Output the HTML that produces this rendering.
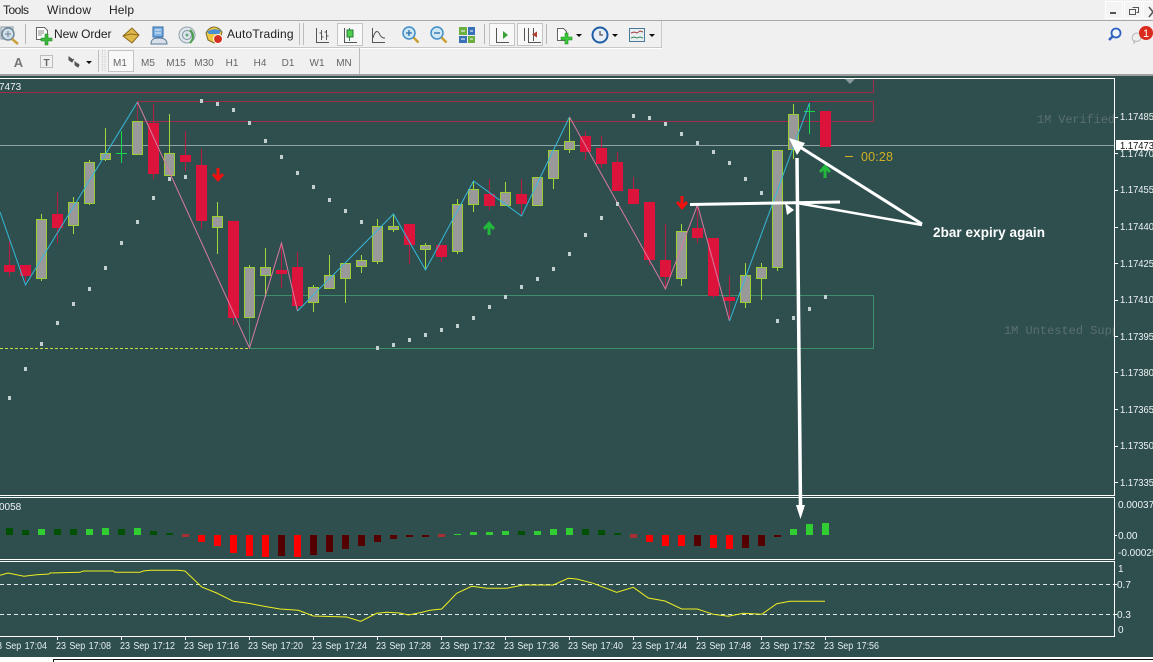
<!DOCTYPE html>
<html><head><meta charset="utf-8"><style>
html,body{margin:0;padding:0;background:#f0f0f0;width:1153px;height:662px;overflow:hidden}
svg{display:block;font-family:"Liberation Sans",sans-serif}
.w{stroke:#a4d83a;stroke-width:1;fill:none}
.r{stroke:#b81c42;stroke-width:1;fill:none}
.bu{fill:#999;stroke:#9acd32;stroke-width:1}
.be{fill:#dc143c;stroke:#dc143c;stroke-width:1}
.d{fill:#c3d0d0}
.p{fill:#eef3f3;font-size:10px}
.t{fill:#e6eeee;font-size:10px;word-spacing:1px}
.tf{fill:#666;font-size:10px;text-anchor:middle}
.m{fill:#222;font-size:12px}
.lg{fill:#32cd32}.dg{fill:#005000}.rd{fill:#f00}.dr{fill:#550000}.mr{fill:#a83030}
.zr{fill:#a42a4a}.zg{fill:#3c8f6a}
</style></head><body>
<svg width="1153" height="662" viewBox="0 0 1153 662" xmlns="http://www.w3.org/2000/svg">
<rect width="1153" height="662" fill="#f0f0f0"/>
<!-- menu -->
<text class="m" x="3" y="14" textLength="26">Tools</text>
<text class="m" x="47" y="14" textLength="44">Window</text>
<text class="m" x="109" y="14" textLength="25">Help</text>
<rect x="0" y="20" width="1153" height="1" fill="#a8a8a8"/>
<rect x="1105.500" y="1.500" width="17" height="17" fill="#f4f4f4" stroke="#fff"/>
<rect x="1124.500" y="1.500" width="17" height="17" fill="#f4f4f4" stroke="#fff"/>
<rect x="1143.500" y="1.500" width="12" height="17" fill="#f4f4f4" stroke="#fff"/>
<rect x="1110" y="12" width="6" height="2" fill="#555"/>
<path d="M1132.500 7.500h6v5h-2M1129.500 9.500h6v5h-6z" fill="none" stroke="#555"/>
<path d="M1149 7l4 5-4 5" fill="none" stroke="#555" stroke-width="1.500"/>
<!-- toolbars -->
<path d="M0 47.500H662M661.500 21V48" stroke="#c8c8c8" fill="none"/>
<path d="M0 48.500H662" stroke="#fff"/>
<path d="M359.500 48V74" stroke="#bbb"/>
<path d="M25.500 24V44M484.500 24V44M546.500 24V44" stroke="#b5b5b5"/>
<path d="M299.500 23V45M303.500 23V45M98.500 50V72" stroke="#bcbcbc"/>
<path d="M102.500 50V72M105 50V72" stroke="#c8c8c8" stroke-dasharray="1 1"/>
<rect x="337.500" y="23.500" width="25" height="22" fill="#f8f8f8" stroke="#c4c4c4"/>
<rect x="489.500" y="23.500" width="25" height="22" fill="#f8f8f8" stroke="#c4c4c4"/>
<rect x="517.500" y="23.500" width="25" height="22" fill="#f8f8f8" stroke="#c4c4c4"/>
<rect x="108.500" y="50.500" width="25" height="21" fill="#f8f8f8" stroke="#c4c4c4"/>
<!-- left magnifier -->
<rect x="1" y="27" width="12" height="12" fill="#dce4ea" stroke="#8a9aa8"/>
<circle cx="8" cy="34" r="6" fill="#cfe0ea" stroke="#6f8698" stroke-width="1.500"/>
<path d="M5 34h6M8 31v6" stroke="#6a7f90"/>
<path d="M12 39l6 5" stroke="#c9a040" stroke-width="2.500"/>
<!-- new order -->
<path d="M36.500 27.500h8l3 3v9h-11z" fill="#fff" stroke="#666"/>
<path d="M38 31h6M38 33h6M38 35h4" stroke="#888"/>
<path d="M45 34h3v4h4v3h-4v4h-3v-4h-4v-3h4z" fill="#3cb83c" stroke="#1f8a1f" stroke-width=".6"/>
<text x="54" y="38" font-size="12" fill="#222" textLength="57.500">New Order</text>
<!-- diamond -->
<path d="M123 36l9-8 7 7-7 8z" fill="#e0b84a" stroke="#8a6a20"/>
<path d="M123 36l8-2 8 1" stroke="#8a6a20" fill="none"/>
<!-- monitor person -->
<rect x="153" y="27" width="10" height="10" fill="#7bb0e0" stroke="#2f67a8"/>
<path d="M155 30h6M155 33h6" stroke="#e8f0f8"/>
<path d="M151 44c0-5 3-6 8-6s8 2 8 6z" fill="#d8dfe8" stroke="#5a7a9a"/>
<!-- signal -->
<circle cx="187" cy="35" r="8" fill="#dfe5e8" stroke="#8fa3ae"/>
<circle cx="187" cy="35" r="4.500" fill="none" stroke="#7c94a2"/>
<circle cx="187" cy="35" r="1.500" fill="#6a8"/>
<path d="M190 30c4 3 4 9 0 13" stroke="#4aa04a" stroke-width="2" fill="none"/>
<!-- autotrading -->
<path d="M206 33c2-4 5-6 8-6s6 2 8 5l-2 8-6 3-6-3z" fill="#f0c840" stroke="#7a6a30"/>
<path d="M207 32c3-3 10-4 14-1l-2 3h-10z" fill="#4a90d0"/>
<circle cx="218" cy="39" r="4.500" fill="#d83020" stroke="#fff"/>
<text x="227" y="38" font-size="12" fill="#222" textLength="66.500">AutoTrading</text>
<!-- chart types -->
<g fill="none" stroke="#555">
<path d="M316.500 28V42.500H329M321.500 30V40M326.500 30V40M319.500 33h2M321.500 37h2M324.500 32h2M326.500 36h2" />
<path d="M344.500 28V42.500H357"/><path d="M349.500 28V41" stroke="#2a8a4a"/>
<path d="M372.500 28V42.500H385M373 38c2-8 5-8 7-3 2 3 3 3 5 3"/>
<path d="M496.500 28V42.500H509M528.500 28V42.500H541M524.500 28V41M533.500 28V41"/>
</g>
<rect x="347" y="30" width="6" height="7" fill="#4fcf4f" stroke="#2a7a3a"/>
<path d="M503 31l5 4-5 4z" fill="#3aa03a"/>
<path d="M532 34.500l5-3v6z" fill="#b04030"/>
<!-- zoom in/out -->
<g>
<circle cx="409" cy="33" r="6" fill="#cfe6f5" stroke="#3f8fc8" stroke-width="1.500"/>
<path d="M406 33h6M409 30v6" stroke="#2a6ea8" stroke-width="1.300"/>
<path d="M413.500 37.500l5 5" stroke="#c8a030" stroke-width="2.500"/>
<circle cx="437" cy="33" r="6" fill="#cfe6f5" stroke="#3f8fc8" stroke-width="1.500"/>
<path d="M434 33h6" stroke="#2a6ea8" stroke-width="1.300"/>
<path d="M441.500 37.500l5 5" stroke="#c8a030" stroke-width="2.500"/>
</g>
<!-- tile -->
<rect x="459" y="27" width="8" height="8" fill="#6cb040"/><rect x="468" y="27" width="7" height="8" fill="#3a70b8"/>
<rect x="459" y="36" width="8" height="7" fill="#3a70b8"/><rect x="468" y="36" width="7" height="7" fill="#6cb040"/>
<path d="M461 31h4M470 31h3M461 39h4M470 39h3" stroke="#fff"/>
<!-- indicators -->
<path d="M557.500 28.500h6l3 3v9h-9z" fill="#fff" stroke="#666"/>
<path d="M565 33h3v4h4v3h-4v4h-3v-4h-4v-3h4z" fill="#3cc83c" stroke="#1f8a1f" stroke-width=".6"/>
<path d="M576 34h6l-3 3zM612 34h6l-3 3zM649 34h6l-3 3zM86 61h6l-3 3z" fill="#111"/>
<!-- clock -->
<circle cx="600" cy="35" r="7.500" fill="#e8eef5" stroke="#1f5fa8" stroke-width="2"/>
<path d="M600 31v4h3" stroke="#333" fill="none"/>
<!-- template -->
<rect x="629.500" y="28.500" width="15" height="13" fill="#e8eef2" stroke="#4a7a9a"/>
<path d="M631 33l3-1 3 1 3-2 3 1" stroke="#a04040" fill="none"/><path d="M631 38l3-1 3 1 3-1 3 1" stroke="#3a8a5a" fill="none"/>
<!-- right icons -->
<circle cx="1116" cy="33" r="4.500" fill="#f0f4fa" stroke="#2f62c0" stroke-width="1.800"/>
<path d="M1113 36l-4 4" stroke="#2f62c0" stroke-width="2.500"/>
<path d="M1134 34c3-2 7-1 7 3s-4 5-6 4l-1 3v-3c-3-2-2-5 0-7z" fill="#eee" stroke="#b8b8b8"/>
<circle cx="1146" cy="33" r="7" fill="#d92a1c"/>
<text x="1146" y="37" font-size="11" fill="#fff" text-anchor="middle">1</text>
<!-- row3 -->
<text x="18.500" y="67" font-size="13" font-weight="bold" fill="#777" text-anchor="middle">A</text>
<rect x="40.500" y="55.500" width="12" height="12" fill="none" stroke="#888" stroke-dasharray="1 1"/>
<text x="46.500" y="66" font-size="10" font-weight="bold" fill="#666" text-anchor="middle">T</text>
<path d="M69 57l4 3-1 2-3-2zM75 62l4 3-1 2-3-2zM74 59l-2 2M79 64l-2 1" fill="#555" stroke="#555"/>
<g>
<text class="tf" x="120" y="66">M1</text><text class="tf" x="148" y="66">M5</text><text class="tf" x="176" y="66">M15</text><text class="tf" x="204" y="66">M30</text><text class="tf" x="232" y="66">H1</text><text class="tf" x="260" y="66">H4</text><text class="tf" x="288" y="66">D1</text><text class="tf" x="317" y="66">W1</text><text class="tf" x="344" y="66">MN</text>
</g>
<!-- chart bg -->
<rect x="0" y="74" width="1153" height="2" fill="#a0a0a0"/>
<rect x="0" y="76" width="1153" height="581" fill="#2f4f4f"/>
<!-- zone rects -->
<rect class="zr" x="0" y="92" width="874" height="1"/>
<rect class="zr" x="873" y="79" width="1" height="14"/>
<rect class="zr" x="137" y="101" width="737" height="1"/>
<rect class="zr" x="137" y="121" width="737" height="1"/>
<rect class="zr" x="137" y="101" width="1" height="21"/>
<rect class="zr" x="873" y="101" width="1" height="21"/>
<rect class="zg" x="249" y="295" width="625" height="1"/>
<rect class="zg" x="249" y="348" width="625" height="1"/>
<rect class="zg" x="249" y="295" width="1" height="54"/>
<rect class="zg" x="873" y="295" width="1" height="54"/>
<rect x="0" y="145" width="1114" height="1" fill="#8ea3a6"/>
<path d="M0 348.500H249" stroke="#c8e040" stroke-dasharray="3 2" shape-rendering="crispEdges"/>
<path d="M845 79l5 5 5-5z" fill="#8a9a9a"/>
<text x="1037" y="123" font-family="Liberation Mono" font-size="12" fill="#5a6e6e" textLength="78">1M Verified</text>
<text x="1004" y="334" font-family="Liberation Mono" font-size="12" fill="#5a6e6e" textLength="115">1M Untested Supp</text>
<rect x="1115" y="300" width="38" height="60" fill="#2f4f4f"/>
<!-- candles -->
<g shape-rendering="crispEdges">
<path class="r" d="M9.500 241V277M25.500 265V282M57.500 192V243M153.500 104V179M185.500 131V171M201.500 149V229M233.500 221V325M281.500 243V288M297.500 252V310M409.500 224V264M441.500 245V262M489.500 179V210M521.500 179V215M585.500 131V160M601.500 136V168M617.500 152V190M633.500 177V203M649.500 202V265M665.500 224V288M697.500 207V243M713.500 238V298M729.500 275V320"/>
<path class="w" d="M41.500 214V281M73.500 197V234M89.500 160V205M105.500 128V161M137.500 121V154M169.500 114V176M217.500 202V254M249.500 265V317M265.500 248V297M313.500 285V312M329.500 255V288M345.500 263V303M361.500 255V273M377.500 219V264M393.500 215V232M425.500 243V270M457.500 199V254M473.500 181V212M505.500 182V205M537.500 177V205M553.500 150V189M569.500 118V153M681.500 224V286M745.500 263V308M761.500 263V300M777.500 150V271M793.500 104V159"/>
<path d="M116 153.500H127M121.500 131V163M804 111.500H815M809.500 103V134" stroke="#16d84a" fill="none"/>
<rect class="be" x="4.500" y="265.500" width="10" height="6"/>
<rect class="be" x="20.500" y="265.500" width="10" height="10"/>
<rect class="bu" x="36.500" y="219.500" width="10" height="59"/>
<rect class="be" x="52.500" y="214.500" width="10" height="13"/>
<rect class="bu" x="68.500" y="202.500" width="10" height="23"/>
<rect class="bu" x="84.500" y="162.500" width="10" height="41"/>
<rect class="bu" x="100.500" y="153.500" width="10" height="6"/>
<rect class="bu" x="132.500" y="121.500" width="10" height="33"/>
<rect class="be" x="148.500" y="123.500" width="10" height="50"/>
<rect class="bu" x="164.500" y="153.500" width="10" height="22"/>
<rect class="be" x="180.500" y="155.500" width="10" height="6"/>
<rect class="be" x="196.500" y="165.500" width="10" height="55"/>
<rect class="bu" x="212.500" y="216.500" width="10" height="11"/>
<rect class="be" x="228.500" y="221.500" width="10" height="96"/>
<rect class="bu" x="244.500" y="267.500" width="10" height="50"/>
<rect class="bu" x="260.500" y="267.500" width="10" height="8"/>
<rect class="be" x="276.500" y="270.500" width="10" height="3"/>
<rect class="be" x="292.500" y="267.500" width="10" height="38"/>
<rect class="bu" x="308.500" y="287.500" width="10" height="15"/>
<rect class="bu" x="324.500" y="275.500" width="10" height="13"/>
<rect class="bu" x="340.500" y="263.500" width="10" height="15"/>
<rect class="bu" x="356.500" y="260.500" width="10" height="6"/>
<rect class="bu" x="372.500" y="226.500" width="10" height="35"/>
<rect class="bu" x="388.500" y="226.500" width="10" height="3"/>
<rect class="be" x="404.500" y="224.500" width="10" height="20"/>
<rect class="bu" x="420.500" y="245.500" width="10" height="4"/>
<rect class="be" x="436.500" y="245.500" width="10" height="11"/>
<rect class="bu" x="452.500" y="204.500" width="10" height="47"/>
<rect class="bu" x="468.500" y="189.500" width="10" height="15"/>
<rect class="be" x="484.500" y="194.500" width="10" height="11"/>
<rect class="bu" x="500.500" y="192.500" width="10" height="13"/>
<rect class="be" x="516.500" y="194.500" width="10" height="9"/>
<rect class="bu" x="532.500" y="177.500" width="10" height="28"/>
<rect class="bu" x="548.500" y="150.500" width="10" height="28"/>
<rect class="bu" x="564.500" y="141.500" width="10" height="8"/>
<rect class="be" x="580.500" y="136.500" width="10" height="15"/>
<rect class="be" x="596.500" y="148.500" width="10" height="15"/>
<rect class="be" x="612.500" y="162.500" width="10" height="28"/>
<rect class="be" x="628.500" y="189.500" width="10" height="14"/>
<rect class="be" x="644.500" y="202.500" width="10" height="57"/>
<rect class="be" x="660.500" y="260.500" width="10" height="16"/>
<rect class="bu" x="676.500" y="231.500" width="10" height="47"/>
<rect class="be" x="692.500" y="228.500" width="10" height="9"/>
<rect class="be" x="708.500" y="238.500" width="10" height="57"/>
<rect class="be" x="724.500" y="297.500" width="10" height="3"/>
<rect class="bu" x="740.500" y="275.500" width="10" height="27"/>
<rect class="bu" x="756.500" y="267.500" width="10" height="11"/>
<rect class="bu" x="772.500" y="150.500" width="10" height="117"/>
<rect class="bu" x="788.500" y="114.500" width="10" height="35"/>
<rect class="be" x="820.500" y="111.500" width="10" height="35"/>
</g>
<!-- zigzag -->
<path d="M0 212L25.500 285L137.500 102" fill="none" stroke="#35b8d8"/>
<path d="M137.500 102L249.500 348L281.500 243L297.500 311" fill="none" stroke="#d87aa0"/>
<path d="M297.500 311L393.500 214L425.500 270L473.500 181L521.500 216L569.500 117" fill="none" stroke="#35b8d8"/>
<path d="M569.500 117L665.500 289L697.500 205L729.500 321" fill="none" stroke="#d87aa0"/>
<path d="M729.500 321L809.500 103" fill="none" stroke="#35b8d8"/>
<!-- SAR dots -->
<g class="d">
<rect x="8" y="396" width="3" height="4"/><rect x="24" y="367" width="3" height="4"/><rect x="40" y="342" width="3" height="4"/><rect x="56" y="321" width="3" height="4"/><rect x="72" y="302" width="3" height="4"/><rect x="88" y="287" width="3" height="4"/><rect x="104" y="266" width="3" height="4"/><rect x="120" y="241" width="3" height="4"/><rect x="136" y="220" width="3" height="4"/><rect x="152" y="196" width="3" height="4"/><rect x="168" y="177" width="3" height="4"/><rect x="184" y="175" width="3" height="4"/>
<rect x="200" y="99" width="3" height="4"/><rect x="216" y="102" width="3" height="4"/><rect x="232" y="108" width="3" height="4"/><rect x="248" y="121" width="3" height="4"/><rect x="264" y="139" width="3" height="4"/><rect x="280" y="155" width="3" height="4"/><rect x="296" y="171" width="3" height="4"/><rect x="312" y="185" width="3" height="4"/><rect x="328" y="198" width="3" height="4"/><rect x="344" y="209" width="3" height="4"/><rect x="360" y="220" width="3" height="4"/>
<rect x="376" y="346" width="3" height="4"/><rect x="392" y="343" width="3" height="4"/><rect x="408" y="338" width="3" height="4"/><rect x="424" y="333" width="3" height="4"/><rect x="440" y="328" width="3" height="4"/><rect x="456" y="324" width="3" height="4"/><rect x="472" y="316" width="3" height="4"/><rect x="488" y="305" width="3" height="4"/><rect x="504" y="295" width="3" height="4"/><rect x="520" y="285" width="3" height="4"/><rect x="536" y="277" width="3" height="4"/><rect x="552" y="267" width="3" height="4"/><rect x="568" y="252" width="3" height="4"/><rect x="584" y="233" width="3" height="4"/><rect x="600" y="216" width="3" height="4"/><rect x="616" y="202" width="3" height="4"/>
<rect x="632" y="114" width="3" height="4"/><rect x="648" y="116" width="3" height="4"/><rect x="664" y="122" width="3" height="4"/><rect x="680" y="132" width="3" height="4"/><rect x="696" y="141" width="3" height="4"/><rect x="712" y="150" width="3" height="4"/><rect x="728" y="161" width="3" height="4"/><rect x="744" y="177" width="3" height="4"/><rect x="760" y="191" width="3" height="4"/>
<rect x="776" y="319" width="3" height="4"/><rect x="792" y="316" width="3" height="4"/><rect x="808" y="307" width="3" height="4"/><rect x="824" y="295" width="3" height="4"/>
</g>
<!-- signal arrows -->
<polygon transform="translate(218 175)" fill="#f01010" points="0,7 6,0 4,-2 1.500,0.500 1.500,-7 -1.500,-7 -1.500,0.500 -4,-2 -6,0"/>
<polygon transform="translate(682 203)" fill="#f01010" points="0,7 6,0 4,-2 1.500,0.500 1.500,-7 -1.500,-7 -1.500,0.500 -4,-2 -6,0"/>
<polygon transform="translate(489 228)" fill="#22b83c" points="0,-7 6,0 4,2 1.500,-0.500 1.500,7 -1.500,7 -1.500,-0.500 -4,2 -6,0"/>
<polygon transform="translate(825 171)" fill="#22b83c" points="0,-7 6,0 4,2 1.500,-0.500 1.500,7 -1.500,7 -1.500,-0.500 -4,2 -6,0"/>
<!-- countdown -->
<path d="M845 156.500h8" stroke="#d0b020"/>
<text x="861" y="161" font-size="12.500" fill="#d0b020" textLength="32">00:28</text>
<!-- frames -->
<g fill="none" stroke="#fff" shape-rendering="crispEdges">
<path d="M0 78.500H1114.500V495.500H0"/>
<path d="M0 497.500H1114.500V559.500H0"/>
<path d="M0 561.500H1114.500V636.500H0"/>
</g>
<!-- annotations -->
<g fill="none" stroke="#fff" stroke-linecap="butt">
<path d="M690 204.500L840 202" stroke-width="3"/>
<path d="M797 158L800.500 506" stroke-width="3.500"/>
<path d="M800 147L922 224" stroke-width="3"/>
<path d="M797 203L922 225" stroke-width="2.500"/>
</g>
<g fill="#fff">
<polygon points="789,138 805,143 797,155"/>
<polygon points="785,203 794,210 787,215"/>
<polygon points="796,505 805,505 800.500,519"/>
</g>
<text x="933" y="237" font-size="13.500" font-weight="bold" fill="#fff" textLength="112">2bar expiry again</text>
<!-- price axis -->
<g stroke="#fff" shape-rendering="crispEdges">
<path d="M1115 117.500h3M1115 153.500h3M1115 190.500h3M1115 227.500h3M1115 263.500h3M1115 300.500h3M1115 336.500h3M1115 372.500h3M1115 409.500h3M1115 446.500h3M1115 482.500h3M1115 535.500h2M1115 584.500h2M1115 614.500h2"/>
</g>
<text class="p" x="1120" y="120" textLength="34" lengthAdjust="spacingAndGlyphs">1.17485</text>
<text class="p" x="1120" y="157" textLength="34" lengthAdjust="spacingAndGlyphs">1.17470</text>
<text class="p" x="1120" y="193" textLength="34" lengthAdjust="spacingAndGlyphs">1.17455</text>
<text class="p" x="1120" y="230" textLength="34" lengthAdjust="spacingAndGlyphs">1.17440</text>
<text class="p" x="1120" y="267" textLength="34" lengthAdjust="spacingAndGlyphs">1.17425</text>
<text class="p" x="1120" y="303" textLength="34" lengthAdjust="spacingAndGlyphs">1.17410</text>
<text class="p" x="1120" y="340" textLength="34" lengthAdjust="spacingAndGlyphs">1.17395</text>
<text class="p" x="1120" y="376" textLength="34" lengthAdjust="spacingAndGlyphs">1.17380</text>
<text class="p" x="1120" y="413" textLength="34" lengthAdjust="spacingAndGlyphs">1.17365</text>
<text class="p" x="1120" y="449" textLength="34" lengthAdjust="spacingAndGlyphs">1.17350</text>
<text class="p" x="1120" y="486" textLength="34" lengthAdjust="spacingAndGlyphs">1.17335</text>
<rect x="1116" y="140" width="37" height="10" fill="#fff"/>
<text x="1120" y="149" font-size="10" fill="#111" textLength="34" lengthAdjust="spacingAndGlyphs">1.17473</text>
<text class="p" x="1118" y="508">0.000377</text>
<text class="p" x="1118" y="539">0.00</text>
<text class="p" x="1118" y="556">-0.00025</text>
<text class="p" x="1118" y="572">1</text>
<text class="p" x="1117" y="588">0.7</text>
<text class="p" x="1117" y="618">0.3</text>
<text class="p" x="1118" y="633">0</text>
<text class="p" x="-1" y="90">7473</text>
<text class="p" x="-1" y="510">0058</text>
<!-- histogram -->
<g shape-rendering="crispEdges">
<rect class="dg" x="6" y="528" width="7" height="7"/><rect class="dg" x="22" y="530" width="7" height="5"/><rect class="lg" x="38" y="529" width="7" height="6"/><rect class="dg" x="54" y="529" width="7" height="6"/><rect class="dg" x="70" y="529" width="7" height="6"/><rect class="lg" x="86" y="529" width="7" height="6"/><rect class="lg" x="102" y="528" width="7" height="7"/><rect class="dg" x="118" y="529" width="7" height="6"/><rect class="lg" x="134" y="528" width="7" height="7"/><rect class="dg" x="150" y="531" width="7" height="4"/><rect class="dg" x="166" y="533" width="7" height="2"/>
<rect class="mr" x="182" y="534" width="7" height="3"/><rect class="rd" x="198" y="535" width="7" height="7"/><rect class="rd" x="214" y="535" width="7" height="11"/><rect class="rd" x="230" y="535" width="7" height="18"/><rect class="rd" x="246" y="535" width="7" height="21"/><rect class="rd" x="262" y="535" width="7" height="22"/><rect class="dr" x="278" y="535" width="7" height="21"/><rect class="rd" x="294" y="535" width="7" height="22"/><rect class="dr" x="310" y="535" width="7" height="20"/><rect class="dr" x="326" y="535" width="7" height="17"/><rect class="dr" x="342" y="535" width="7" height="14"/><rect class="dr" x="358" y="535" width="7" height="11"/><rect class="dr" x="374" y="535" width="7" height="7"/><rect class="dr" x="390" y="535" width="7" height="4"/><rect class="dr" x="406" y="535" width="7" height="2"/><rect class="dr" x="422" y="535" width="7" height="2"/>
<rect class="mr" x="438" y="534" width="7" height="3"/><rect class="lg" x="454" y="534" width="7" height="1"/><rect class="lg" x="470" y="532" width="7" height="3"/><rect class="lg" x="486" y="532" width="7" height="3"/><rect class="lg" x="502" y="531" width="7" height="4"/><rect class="dg" x="518" y="531" width="7" height="4"/><rect class="lg" x="534" y="531" width="7" height="4"/><rect class="lg" x="550" y="529" width="7" height="6"/><rect class="lg" x="566" y="528" width="7" height="7"/><rect class="dg" x="582" y="529" width="7" height="6"/><rect class="dg" x="598" y="530" width="7" height="5"/><rect class="dg" x="614" y="533" width="7" height="2"/>
<rect class="mr" x="630" y="534" width="7" height="4"/><rect class="rd" x="646" y="535" width="7" height="7"/><rect class="rd" x="662" y="535" width="7" height="11"/><rect class="rd" x="678" y="535" width="7" height="11"/><rect class="dr" x="694" y="535" width="7" height="11"/><rect class="rd" x="710" y="535" width="7" height="13"/><rect class="rd" x="726" y="535" width="7" height="14"/><rect class="dr" x="742" y="535" width="7" height="13"/><rect class="dr" x="758" y="535" width="7" height="11"/><rect class="dr" x="774" y="535" width="7" height="2"/>
<rect class="lg" x="790" y="529" width="7" height="6"/><rect class="lg" x="806" y="524" width="7" height="11"/><rect class="lg" x="822" y="523" width="7" height="12"/>
</g>
<!-- stochastic -->
<path d="M0 584.500H1114M0 614.500H1114" stroke="#dfe8e8" stroke-dasharray="4 3" fill="none"/>
<polyline fill="none" stroke="#eeee20" points="0,575.300 8,573 24,576.300 36.700,574.700 49,574 50,573 80,572.300 83.300,571 113.300,571 115,572.300 140,572.300 143.300,571 150,570.300 178.300,570.300 185,571 201.700,587 216.700,593 233.300,601.300 248.300,603.300 266.700,606.700 280,609 298.300,610.300 313.300,616 346.700,617 360.700,621.300 376.700,613.300 386.700,612.300 400,613 408.300,615 420,612.700 430,610.300 441.700,609 456.700,593.300 471.700,586.300 486.700,588.300 506.700,588.300 523.300,585 553.300,585 568.300,578.300 576.700,579 593.300,583.300 616.700,592.300 633.300,587.300 648.300,598 665,601 681.700,609 697.300,609 713.300,614.300 728.300,616.300 743.300,613.300 761.700,614.300 776.700,603.700 790,601.300 825,601.300"/>
<!-- time axis -->
<path d="M57.500 636v4M121.500 636v4M185.500 636v4M249.500 636v4M313.500 636v4M377.500 636v4M441.500 636v4M505.500 636v4M569.500 636v4M633.500 636v4M697.500 636v4M761.500 636v4M825.500 636v4" stroke="#fff"/>
<g class="t">
<text x="-8" y="649" textLength="55" lengthAdjust="spacingAndGlyphs">23 Sep 17:04</text>
<text x="56" y="649" textLength="55" lengthAdjust="spacingAndGlyphs">23 Sep 17:08</text>
<text x="120" y="649" textLength="55" lengthAdjust="spacingAndGlyphs">23 Sep 17:12</text>
<text x="184" y="649" textLength="55" lengthAdjust="spacingAndGlyphs">23 Sep 17:16</text>
<text x="248" y="649" textLength="55" lengthAdjust="spacingAndGlyphs">23 Sep 17:20</text>
<text x="312" y="649" textLength="55" lengthAdjust="spacingAndGlyphs">23 Sep 17:24</text>
<text x="376" y="649" textLength="55" lengthAdjust="spacingAndGlyphs">23 Sep 17:28</text>
<text x="440" y="649" textLength="55" lengthAdjust="spacingAndGlyphs">23 Sep 17:32</text>
<text x="504" y="649" textLength="55" lengthAdjust="spacingAndGlyphs">23 Sep 17:36</text>
<text x="568" y="649" textLength="55" lengthAdjust="spacingAndGlyphs">23 Sep 17:40</text>
<text x="632" y="649" textLength="55" lengthAdjust="spacingAndGlyphs">23 Sep 17:44</text>
<text x="696" y="649" textLength="55" lengthAdjust="spacingAndGlyphs">23 Sep 17:48</text>
<text x="760" y="649" textLength="55" lengthAdjust="spacingAndGlyphs">23 Sep 17:52</text>
<text x="824" y="649" textLength="55" lengthAdjust="spacingAndGlyphs">23 Sep 17:56</text>
</g>
<!-- bottom -->
<rect x="0" y="657" width="1153" height="5" fill="#fff"/>
<rect x="53" y="659" width="1100" height="1" fill="#111"/>
<rect x="53" y="659" width="1" height="3" fill="#111"/>
</svg>
</body></html>
